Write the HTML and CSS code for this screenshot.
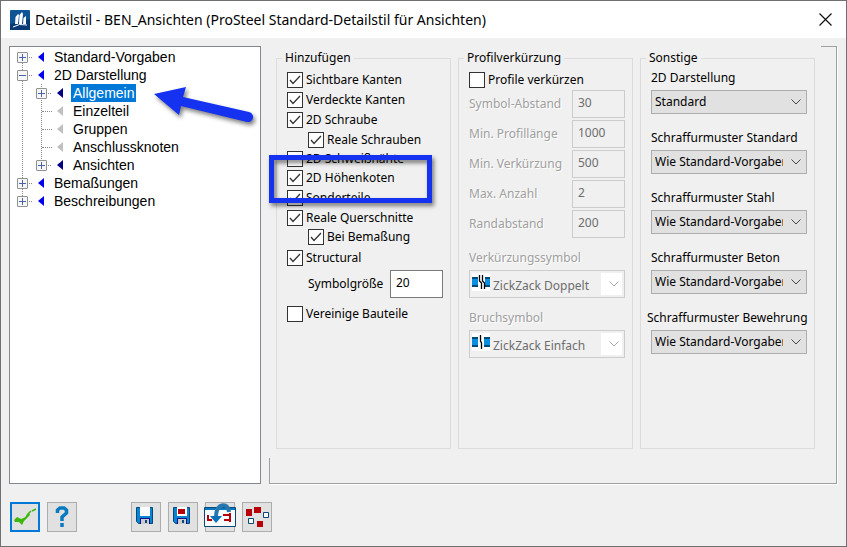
FILE: index.html
```html
<!DOCTYPE html>
<html lang="de">
<head>
    <meta charset="UTF-8">
    <meta name="viewport" content="width=device-width, initial-scale=1.0">
    <title>Detailstil - BEN_Ansichten</title>
    <link rel="stylesheet" href="styles.css">
</head>
<body>

<div class="dialog">
    <header class="titlebar">
        <svg class="app-icon" viewBox="0 0 20 20" width="20" height="20">
            <rect width="20" height="20" rx="1" fill="#0f5596"/>
            <path d="M0 14L20 9V20H0Z" fill="#083b74"/>
            <path d="M5 14L5.500 7L8 4L9 5L8 14ZM9 14L9.500 5L12 2L13 4L12 14ZM13 14L13.500 8L16 6V14Z" fill="#fff"/>
            <path d="M3 17Q9 13 17 15" stroke="#fff" fill="none"/>
        </svg>
        <h1>Detailstil - BEN_Ansichten (ProSteel Standard-Detailstil für Ansichten)</h1>
        <button type="button" class="close-btn" aria-label="Schließen">
            <svg viewBox="0 0 13 13" width="13" height="13"><path d="M.5 .5L12.500 12.500M12.500 .5L.5 12.500" stroke="#111" stroke-width="1.200"/></svg>
        </button>
    </header>

    <main class="content">
        <nav class="tree">
            <ul>
                <li><span class="node"><button type="button" class="expander plus" aria-label="Öffnen"></button><i class="marker"></i><a href="#">Standard-Vorgaben</a></span></li>
                <li>
                    <span class="node"><button type="button" class="expander" aria-label="Schließen"></button><i class="marker"></i><a href="#">2D Darstellung</a></span>
                    <ul>
                        <li><span class="node"><button type="button" class="expander plus" aria-label="Öffnen"></button><i class="marker dark"></i><a href="#" class="selected">Allgemein</a></span></li>
                        <li><span class="node"><i class="leaf"></i><i class="marker grey"></i><a href="#">Einzelteil</a></span></li>
                        <li><span class="node"><i class="leaf"></i><i class="marker grey"></i><a href="#">Gruppen</a></span></li>
                        <li><span class="node"><i class="leaf"></i><i class="marker grey"></i><a href="#">Anschlussknoten</a></span></li>
                        <li><span class="node"><button type="button" class="expander plus" aria-label="Öffnen"></button><i class="marker dark"></i><a href="#">Ansichten</a></span></li>
                    </ul>
                </li>
                <li><span class="node"><button type="button" class="expander plus" aria-label="Öffnen"></button><i class="marker"></i><a href="#">Bemaßungen</a></span></li>
                <li><span class="node"><button type="button" class="expander plus" aria-label="Öffnen"></button><i class="marker"></i><a href="#">Beschreibungen</a></span></li>
            </ul>
            <svg class="arrow" viewBox="0 0 110 50" width="110" height="50">
                <path d="M4 9L36 2L33 12L99 27A5 5 0 0 1 97 37L31 21L29 30Z" fill="#1432f0"/>
            </svg>
        </nav>

        <section class="page">
            <div class="groups">
                <fieldset>
                    <legend>Hinzufügen</legend>
                    <div class="options">
                        <label class="check"><input type="checkbox" checked>Sichtbare Kanten</label>
                        <label class="check"><input type="checkbox" checked>Verdeckte Kanten</label>
                        <label class="check"><input type="checkbox" checked>2D Schraube</label>
                        <label class="check sub"><input type="checkbox" checked>Reale Schrauben</label>
                        <label class="check short"><input type="checkbox">2D Schweißnähte</label>
                        <div class="highlighted">
                            <label class="check"><input type="checkbox" checked>2D Höhenkoten</label>
                            <i class="highlight"></i>
                        </div>
                        <label class="check"><input type="checkbox" checked>Sonderteile</label>
                        <label class="check"><input type="checkbox" checked>Reale Querschnitte</label>
                        <label class="check sub short"><input type="checkbox" checked>Bei Bemaßung</label>
                        <label class="check tall"><input type="checkbox" checked>Structural</label>
                        <div class="field indent">
                            <label for="symbol-size">Symbolgröße</label>
                            <input type="text" id="symbol-size" value="20">
                        </div>
                        <label class="check"><input type="checkbox">Vereinige Bauteile</label>
                    </div>
                </fieldset>

                <fieldset>
                    <legend>Profilverkürzung</legend>
                    <div class="options">
                        <label class="check"><input type="checkbox">Profile verkürzen</label>
                        <div class="field"><label for="gap">Symbol-Abstand</label><input type="text" id="gap" value="30" disabled></div>
                        <div class="field"><label for="min-length">Min. Profillänge</label><input type="text" id="min-length" value="1000" disabled></div>
                        <div class="field"><label for="min-cut">Min. Verkürzung</label><input type="text" id="min-cut" value="500" disabled></div>
                        <div class="field"><label for="max-count">Max. Anzahl</label><input type="text" id="max-count" value="2" disabled></div>
                        <div class="field"><label for="edge">Randabstand</label><input type="text" id="edge" value="200" disabled></div>
                    </div>
                    <div class="symbols">
                        <label for="cut-symbol">Verkürzungssymbol</label>
                        <div class="symbol-select">
                            <svg viewBox="0 0 18 18" width="18" height="18">
                                <path fill="#fff" d="M0 0H18V18H0Z"/>
                                <path fill="#0a8ee0" d="M0 4H6V14H0ZM13 4H18V14H13Z"/>
                                <path stroke="#064a78" stroke-width="2" d="M0 5H6M0 13H6M13 5H18M13 13H18"/>
                                <path stroke="#000" stroke-width="1.300" fill="none" d="M7.500 2V8L9.500 10V16M10.500 2V8L12.500 10V16"/>
                            </svg>
                            <select id="cut-symbol" disabled><option>ZickZack Doppelt</option></select>
                        </div>
                        <label for="break-symbol">Bruchsymbol</label>
                        <div class="symbol-select">
                            <svg viewBox="0 0 18 18" width="18" height="18">
                                <path fill="#fff" d="M0 0H18V18H0Z"/>
                                <path fill="#0a8ee0" d="M0 4H6V14H0ZM12 4H18V14H12Z"/>
                                <path stroke="#064a78" stroke-width="2" d="M0 5H6M0 13H6M12 5H18M12 13H18"/>
                                <path stroke="#000" stroke-width="1.300" fill="none" d="M8.500 2V8L9.500 10V16"/>
                            </svg>
                            <select id="break-symbol" disabled><option>ZickZack Einfach</option></select>
                        </div>
                    </div>
                </fieldset>

                <fieldset>
                    <legend>Sonstige</legend>
                    <div class="patterns">
                        <label for="display">2D Darstellung</label>
                        <select id="display"><option>Standard</option></select>
                        <label for="hatch-default">Schraffurmuster Standard</label>
                        <select id="hatch-default"><option>Wie Standard-Vorgaben</option></select>
                        <label for="hatch-steel">Schraffurmuster Stahl</label>
                        <select id="hatch-steel"><option>Wie Standard-Vorgaben</option></select>
                        <label for="hatch-concrete">Schraffurmuster Beton</label>
                        <select id="hatch-concrete"><option>Wie Standard-Vorgaben</option></select>
                        <label for="hatch-rebar" class="wide">Schraffurmuster Bewehrung</label>
                        <select id="hatch-rebar"><option>Wie Standard-Vorgaben</option></select>
                    </div>
                </fieldset>
            </div>
        </section>
    </main>

    <footer class="toolbar">
        <button type="button" class="tool default" aria-label="OK">
            <svg viewBox="0 0 30 30" width="30" height="30"><path d="M4 18L7 15L11 17L16 15L19 11L20 13L14 19L12 23L9 20L5 20Z" fill="#3cb80c"/><path d="M15 17L18 12L21 9M22 9L26 7" stroke="#3cb80c" stroke-width="1.500" fill="none"/></svg>
        </button>
        <button type="button" class="tool" aria-label="Hilfe">
            <svg viewBox="0 0 30 30" width="30" height="30"><path d="M10.500 11V8L13 6H17L19.500 8V11L15 15V19M15 21V25" stroke="#0a7abf" stroke-width="3.500" fill="none"/></svg>
        </button>
        <span class="spacer"></span>
        <button type="button" class="tool" aria-label="Speichern">
            <svg viewBox="0 0 30 30" width="30" height="30">
                <path d="M5.500 5.500H21.500V21.500H7.500L5.500 19.500Z" fill="#0a84d0" stroke="#064878"/>
                <path d="M9 5H19V14H9Z" fill="#fff"/><path d="M9 16H19V22H9Z" fill="#10108c"/><path d="M10 17H18V22H10Z" fill="#ccc"/><path d="M14 18H16V21H14Z" fill="#064878"/>
            </svg>
        </button>
        <button type="button" class="tool" aria-label="Vorlage speichern">
            <svg viewBox="0 0 30 30" width="30" height="30">
                <path d="M5.500 5.500H21.500V21.500H7.500L5.500 19.500Z" fill="#0a84d0" stroke="#064878"/>
                <path d="M9 5H19V14H9Z" fill="#fff"/><path d="M10 7H17V12H10Z" fill="#b80008"/><path d="M9 16H19V22H9Z" fill="#10108c"/><path d="M10 17H18V22H10Z" fill="#ccc"/><path d="M14 18H16V21H14Z" fill="#064878"/>
            </svg>
        </button>
        <button type="button" class="tool" aria-label="Vorlage laden">
            <svg viewBox="0 0 32 30" width="32" height="30">
                <path d="M.5 5.500H31.500V24.500H.5Z" fill="#f8fcfc" stroke="#064878"/><path d="M1 6H31V8H1Z" fill="#0a7abf"/>
                <path d="M4 13V18H8M19 13H26M26 11V20M20 18H26" stroke="#b80008" stroke-width="2" fill="none"/>
                <path d="M12 15Q12 5 18 3.500Q24 2 25 10" stroke="#2878b0" stroke-width="4" fill="none"/>
                <path d="M6 14H18L12 21Z" fill="#0a70b8"/>
            </svg>
        </button>
        <button type="button" class="tool" aria-label="Elemente">
            <svg viewBox="0 0 30 30" width="30" height="30">
                <path d="M4 7H10V14H4ZM12 5H19V11H12ZM15 19H21V25H15Z" fill="#b80008"/>
                <path d="M21.500 10.500H26.500V15.500H21.500ZM6.500 16.500H11.500V21.500H6.500Z" fill="#fff" stroke="#064878"/>
            </svg>
        </button>
    </footer>
</div>

</body>
</html>
```
FILE: styles.css
```css
* {
    box-sizing: border-box;
}

body {
    margin: 0;
    font-family: "Noto Sans", sans-serif;
    font-size: 12px;
    line-height: 16px;
    color: #000;
}

.dialog {
    display: flex;
    flex-direction: column;
    min-height: 100vh;
    background-color: #f0f0f0;
    border: 1px solid #707070;
}

.titlebar {
    display: flex;
    align-items: center;
    height: 37px;
    padding: 0 14px 0 9px;
    background-color: white;
}

.titlebar h1 {
    flex: 1;
    margin: 0 0 0 5px;
    font: 14px/20px "Noto Sans", sans-serif;
}

.close-btn {
    display: flex;
    padding: 0;
    border: none;
    background: none;
}

.content {
    flex: 1;
    display: flex;
    gap: 8px;
    padding: 8px 9px 0 8px;
}

/* Tree */
.tree {
    position: relative;
    flex: 0 0 252px;
    padding: 1px 7px;
    background-color: white;
    border: 1px solid #828790;
    font: 14px/18px "Liberation Sans", Arial, sans-serif;
}

.tree ul {
    margin: 0;
    padding: 0;
    list-style: none;
    background: repeating-linear-gradient(#888 0 1px, transparent 1px 2px) 5px 9px / 1px calc(100% - 18px) no-repeat;
}

.tree ul ul {
    margin-left: 19px;
    background-position: 5px 0;
    background-size: 1px calc(100% - 9px);
}

.node {
    display: flex;
    align-items: center;
    height: 18px;
}

.expander {
    position: relative;
    width: 11px;
    height: 11px;
    padding: 0;
    border: 1px solid #919191;
    border-radius: 1px;
    background: linear-gradient(#4b63a7, #4b63a7) center / 7px 1px no-repeat, #f6f6f6;
}

.expander.plus {
    background: linear-gradient(#4b63a7, #4b63a7) center / 7px 1px no-repeat, linear-gradient(#4b63a7, #4b63a7) center / 1px 7px no-repeat, #f6f6f6;
}

.expander::after {
    content: "";
    position: absolute;
    top: 4px;
    left: 11px;
    width: 3px;
    border-top: 1px dotted #888;
}

.leaf {
    width: 10px;
    margin-left: 6px;
    margin-right: -5px;
    border-top: 1px dotted #888;
}

.marker {
    width: 6px;
    height: 10px;
    margin: 0 8px 0 10px;
    background-color: #0000f0;
    clip-path: polygon(100% 0, 100% 100%, 0 50%);
}

.marker.dark {
    background-color: #000080;
}

.marker.grey {
    background-color: #c0c0c0;
}

.node a {
    padding: 0 2px;
    color: #000;
    text-decoration: none;
}

.node a.selected {
    background-color: #0078d7;
    color: white;
}

.arrow {
    position: absolute;
    top: 38px;
    left: 140px;
    filter: drop-shadow(2px 3px 2px rgba(0, 0, 0, 0.5));
}

/* Settings page */
.page {
    flex: 1;
    min-width: 0;
    display: flex;
    flex-direction: column;
    padding: 4px 21px 34px 7px;
    background: linear-gradient(#a0a0a0, #a0a0a0) right top / 15px 1px no-repeat, linear-gradient(#a0a0a0, #a0a0a0) left bottom / 1px 25px no-repeat;
    border-right: 1px solid #a0a0a0;
    border-bottom: 1px solid #a0a0a0;
    box-shadow: 1px 1px white;
}

.groups {
    flex: 1;
    display: grid;
    grid-template-columns: repeat(3, minmax(0, 1fr));
    gap: 7px;
}

fieldset {
    min-width: 0;
    margin: 0;
    padding: 0 7px 0 10px;
    border: 1px solid #dcdcdc;
}

legend {
    margin-left: -5px;
    padding: 0 3px;
}

.options {
    display: flex;
    flex-direction: column;
    padding-top: 4px;
}

.check {
    display: flex;
    align-items: center;
    gap: 3px;
    height: 20px;
    white-space: nowrap;
}

.check.sub {
    margin-left: 21px;
}

.check.short {
    height: 18px;
}

.check.tall {
    height: 24px;
}

.check input {
    appearance: none;
    flex: none;
    width: 16px;
    height: 16px;
    margin: 0;
    border: 1px solid #333;
    background-color: white;
}

.check input:checked {
    background-image: url("data:image/svg+xml,%3Csvg xmlns='http://www.w3.org/2000/svg' viewBox='0 0 14 14'%3E%3Cpath d='M2 7L5 10.500L12 3' fill='none' stroke='%23333' stroke-width='1.300'/%3E%3C/svg%3E");
}

.highlighted {
    position: relative;
}

/* Marker frame drawn over the neighbouring rows */
.highlight {
    position: absolute;
    top: -13px;
    left: -18px;
    width: 163px;
    height: 48px;
    border: 5px solid #1432f0;
    filter: drop-shadow(2px 3px 2px rgba(0, 0, 0, 0.5));
    pointer-events: none;
}

.field {
    display: flex;
    align-items: center;
    justify-content: space-between;
    height: 30px;
    padding-bottom: 2px;
    color: #a0a0a0;
    text-shadow: 1px 1px white;
    white-space: nowrap;
}

.field.indent {
    height: 34px;
    padding-bottom: 6px;
    margin-left: 21px;
    color: #000;
    text-shadow: none;
}

.field input {
    flex: none;
    width: 53px;
    height: 28px;
    padding: 0 5px 4px;
    border: 1px solid #7a7a7a;
    background-color: white;
    font: inherit;
    color: #000;
}

.field input:disabled {
    border-color: #ccc;
    background-color: #f0f0f0;
    color: #6d6d6d;
}

.symbols {
    display: flex;
    flex-direction: column;
    padding-top: 10px;
    color: #a0a0a0;
}

.symbols label {
    text-shadow: 1px 1px white;
}

.symbol-select {
    display: flex;
    height: 28px;
    margin: 4px 0 12px;
    padding: 2px;
    border: 1px solid #ccc;
    background-color: #f0f0f0;
}

.symbol-select svg {
    flex: none;
}

select {
    appearance: none;
    width: 100%;
    min-width: 0;
    font: inherit;
    border: 1px solid #adadad;
    border-radius: 0;
    color: #000;
    background: url("data:image/svg+xml,%3Csvg xmlns='http://www.w3.org/2000/svg' viewBox='0 0 10 6'%3E%3Cpath d='M.5 .5L5 5L9.500 .5' fill='none' stroke='%23444'/%3E%3C/svg%3E") right 5px center / 10px 6px no-repeat #e1e1e1;
}

.symbol-select select {
    padding: 3px 0 0 3px;
    border: none;
    color: #6d6d6d;
    opacity: 1;
    background: url("data:image/svg+xml,%3Csvg xmlns='http://www.w3.org/2000/svg' viewBox='0 0 10 6'%3E%3Cpath d='M.5 .5L5 5L9.500 .5' fill='none' stroke='%23aaa'/%3E%3C/svg%3E") right 3px center / 10px 6px no-repeat, linear-gradient(white, white) right / 21px 100% no-repeat #f0f0f0;
}

.patterns {
    display: flex;
    flex-direction: column;
    padding-top: 4px;
}

.patterns label {
    white-space: nowrap;
}

.patterns label.wide {
    margin-left: -4px;
}

.patterns select {
    height: 24px;
    margin: 4px 0 16px;
    padding: 0 23px 0 3px;
}

/* Buttons */
.toolbar {
    display: flex;
    gap: 7px;
    padding: 18px 9px 14px;
}

.tool {
    display: flex;
    align-items: center;
    justify-content: center;
    width: 30px;
    height: 30px;
    padding: 0;
    border: 1px solid #adadad;
    background-color: #e1e1e1;
}

.tool svg {
    flex: none;
}

.tool.default {
    border: 2px solid #0078d7;
}

.spacer {
    width: 40px;
}
```
